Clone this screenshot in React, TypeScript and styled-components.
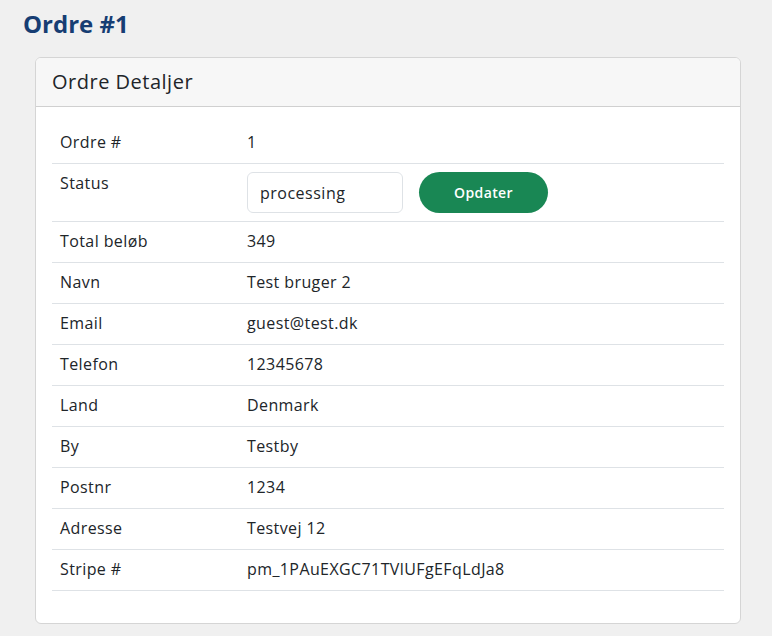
import React from "react";
import styled, { createGlobalStyle } from "styled-components";

const Global = createGlobalStyle`
  html, body { margin: 0; padding: 0; background: #f0f0f0; }
  body { font-family: "Open Sans", "Liberation Sans", sans-serif; color: #212529; }
  * { box-sizing: border-box; }
`;

const Page = styled.div`
  padding: 6px 31px 12px 23px;
  display: flex;
  flex-direction: column;
`;

const Title = styled.h1`
  margin: 0 0 15px 0;
  font-size: 24px;
  line-height: 36px;
  font-weight: 700;
  color: #163d73;
`;

const Card = styled.div`
  margin-left: 12px;
  background: #fff;
  border: 1px solid #d5d5d5;
  border-radius: 6px;
  overflow: hidden;
`;

const CardHeader = styled.div`
  background: #f7f7f7;
  border-bottom: 1px solid #d0d0d0;
  height: 49px;
  padding: 0 16px 1px 16px;
  display: flex;
  align-items: center;
  font-size: 20px;
  font-weight: 500;
  letter-spacing: 0.5px;
  color: #212529;
`;

const CardBody = styled.div`
  padding: 16px 16px 32px 16px;
`;

const Table = styled.table`
  width: 100%;
  border-collapse: collapse;
  font-size: 16px;
  letter-spacing: 0.4px;
`;

const Row = styled.tr`
  border-bottom: 1px solid #dee2e6;
`;

const Label = styled.td`
  width: 187px;
  padding: 7px 8px 9px 8px;
  line-height: 24px;
  vertical-align: top;
`;

const Value = styled.td`
  padding: 7px 8px 9px 8px;
  line-height: 24px;
  vertical-align: top;
`;

const StatusForm = styled.div`
  display: flex;
  align-items: center;
  gap: 16px;
  margin-top: 1px;
  margin-bottom: -1px;
`;

const StatusInput = styled.input`
  width: 156px;
  height: 41px;
  border: 1px solid #dee2e6;
  border-radius: 6px;
  padding: 0 12px;
  font: inherit;
  font-size: 16px;
  letter-spacing: 0.5px;
  color: #212529;
  background: #fff;
  outline: none;
`;

const UpdateButton = styled.button`
  width: 129px;
  height: 41px;
  border: none;
  border-radius: 21px;
  background: #198754;
  color: #fff;
  font: inherit;
  font-size: 14px;
  font-weight: 600;
  letter-spacing: 0.4px;
  cursor: pointer;
`;

const rows: [string, string][] = [
  ["Total beløb", "349"],
  ["Navn", "Test bruger 2"],
  ["Email", "guest@test.dk"],
  ["Telefon", "12345678"],
  ["Land", "Denmark"],
  ["By", "Testby"],
  ["Postnr", "1234"],
  ["Adresse", "Testvej 12"],
  ["Stripe #", "pm_1PAuEXGC71TVlUFgEFqLdJa8"],
];

export default function App() {
  return (
    <>
      <Global />
      <Page>
        <Title>Ordre #1</Title>
        <Card>
          <CardHeader>Ordre Detaljer</CardHeader>
          <CardBody>
            <Table>
              <tbody>
                <Row>
                  <Label>Ordre #</Label>
                  <Value>1</Value>
                </Row>
                <Row>
                  <Label>Status</Label>
                  <Value>
                    <StatusForm>
                      <StatusInput defaultValue="processing" />
                      <UpdateButton>Opdater</UpdateButton>
                    </StatusForm>
                  </Value>
                </Row>
                {rows.map(([k, v]) => (
                  <Row key={k}>
                    <Label>{k}</Label>
                    <Value>{v}</Value>
                  </Row>
                ))}
              </tbody>
            </Table>
          </CardBody>
        </Card>
      </Page>
    </>
  );
}
